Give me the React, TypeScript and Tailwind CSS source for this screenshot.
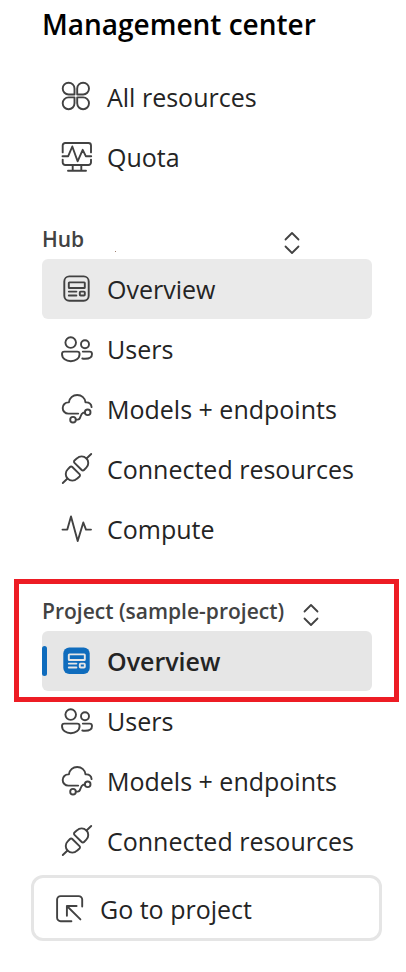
import type { ReactNode } from "react";

function Icon({ children }: { children: ReactNode }) {
  return (
    <svg
      className="size-9 shrink-0"
      viewBox="0 0 36 36"
      fill="none"
      stroke="currentColor"
      strokeWidth="1.9"
      strokeLinecap="round"
      strokeLinejoin="round"
      aria-hidden="true"
    >
      {children}
    </svg>
  );
}

function CloverIcon() {
  return (
    <Icon>
      <path d="M16.5 15.5V9.6A5.9 5.9 0 1 0 10.6 15.5Z" />
      <path d="M19.2 15.5V9.6A5.9 5.9 0 1 1 25.1 15.5Z" />
      <path d="M16.5 18.4V24.3A5.9 5.9 0 1 1 10.6 18.4Z" />
      <path d="M19.2 18.4V24.3A5.9 5.9 0 1 0 25.1 18.4Z" />
    </Icon>
  );
}

function QuotaIcon() {
  return (
    <Icon>
      <path d="M4.7 13.4V6.5a2.5 2.5 0 0 1 2.5-2.5H30.5a2.5 2.5 0 0 1 2.5 2.5V13.4" />
      <path d="M4.7 20.6v2.9a2.5 2.5 0 0 0 2.5 2.5H30.5a2.5 2.5 0 0 0 2.5-2.5V20.6" />
      <path d="M4.5 17.2H10.2L14.3 7.5L19.6 22.3L24.7 10.8L27.8 17.2H33.2" />
      <path d="M14.7 26v5.6M23.3 26v5.6M10 31.8H28" />
    </Icon>
  );
}

function OverviewIcon() {
  return (
    <Icon>
      <rect x="6.3" y="5.4" width="24.4" height="24.4" rx="5" />
      <rect x="10.8" y="11.4" width="16" height="5.6" rx="0.6" />
      <path d="M10.8 20.6h7.6M10.8 24.5h7.6" />
      <rect x="21.8" y="20.6" width="5" height="3.9" rx="0.8" />
    </Icon>
  );
}

function OverviewFilledIcon() {
  return (
    <Icon>
      <rect x="5.3" y="4.5" width="26.4" height="26.4" rx="6" fill="#0f6cbd" stroke="none" />
      <g stroke="#e6e6e6">
        <rect x="10.8" y="11.4" width="16" height="5.6" rx="0.6" />
        <path d="M10.8 20.6h7.6M10.8 24.5h7.6" />
        <rect x="21.8" y="20.6" width="5" height="3.9" rx="0.8" />
      </g>
    </Icon>
  );
}

function UsersIcon() {
  return (
    <Icon>
      <circle cx="12.7" cy="11.6" r="5.3" />
      <circle cx="27" cy="13.2" r="4" />
      <path d="M6.4 20.6H19.2a2.4 2.4 0 0 1 2.4 2.4C21.6 27.6 17.5 30.2 12.8 30.2S4 27.6 4 23a2.4 2.4 0 0 1 2.4-2.4Z" />
      <path d="M24.8 20.6H31.6a2.4 2.4 0 0 1 2.4 2.4C34 26.2 30.8 27.8 27 27.8c-1 0-1.9-.1-2.7-.3" />
    </Icon>
  );
}

function ModelsIcon() {
  return (
    <Icon>
      <path d="M20.2 22.6H10.3a5.6 5.6 0 0 1 0-11.2h.6C11.6 6.8 15 4 19.2 4s7.7 2.8 8.3 7.4h.8c2.8 0 5 2 5.3 4.7" />
      <circle cx="29.7" cy="21.3" r="2.8" />
      <circle cx="15" cy="28.7" r="2.8" />
      <path d="M17.9 28.6h1.9c3.4 0 2-5.6 5.2-6.8h1.8" />
    </Icon>
  );
}

function PlugIcon() {
  const half =
    "M14.3 16L21.5 23.2a1.6 1.6 0 0 1 0 2.3L19 27.7a6.5 6.5 0 0 1-9.3 0a6.5 6.5 0 0 1 0-9.3L12 16a1.6 1.6 0 0 1 2.3 0Z";
  return (
    <Icon>
      <path d={half} />
      <path d="M4.8 32L9.5 27.5" />
      <g transform="rotate(180 19 17.5)">
        <path d={half} />
        <path d="M4.8 32L9.5 27.5" />
      </g>
    </Icon>
  );
}

function PulseIcon() {
  return (
    <Icon>
      <path d="M4.5 18.6H9.3L13 5.5L19.7 30L25.3 11.5L28 18.6H33" />
    </Icon>
  );
}

function GoIcon() {
  return (
    <Icon>
      <path d="M30.2 16.5V9.6a3.5 3.5 0 0 0-3.5-3.5H8.6a3.5 3.5 0 0 0-3.5 3.5V27.7a3.5 3.5 0 0 0 3.5 3.5H19.4" />
      <path d="M14.9 25.8V16H24.6M14.9 16L28.4 29.4" />
    </Icon>
  );
}

function SwitchButton({ label }: { label: string }) {
  return (
    <button type="button" aria-label={label} className="mt-2 text-[#424242]">
      <svg
        className="h-6 w-4"
        viewBox="0 0 16 24"
        fill="none"
        stroke="currentColor"
        strokeWidth="1.8"
        strokeLinecap="round"
        strokeLinejoin="round"
        aria-hidden="true"
      >
        <path d="M1.5 8.5L8 2L14.5 8.5M1.5 15.5L8 22L14.5 15.5" />
      </svg>
    </button>
  );
}

type State = "plain" | "hover" | "current";

const rowStyles: Record<State, string> = {
  plain: "",
  hover: "bg-[#eaeaea]",
  current: "bg-[#e6e6e6] font-semibold",
};

function NavItem({ icon, label, state = "plain" }: { icon: ReactNode; label: string; state?: State }) {
  return (
    <li>
      <a
        href="#"
        aria-current={state === "current" ? "page" : undefined}
        className={`relative flex h-15 items-center gap-[13px] rounded-md pl-4 text-[25px] leading-9 whitespace-nowrap text-[#242424] ${rowStyles[state]}`}
      >
        {state === "current" && (
          <span className="absolute left-0 h-[30px] w-[5px] rounded-full bg-[#0f6cbd]" />
        )}
        <span className="text-[#424242]">{icon}</span>
        <span>{label}</span>
      </a>
    </li>
  );
}

export default function App() {
  return (
    <nav
      aria-label="Management center"
      className="bg-white pb-8 font-['Open_Sans','Noto_Sans',sans-serif] [&_svg]:block"
    >
      <div className="pr-[34px] pl-[42px]">
        <h1 className="h-[67px] pt-1.5 text-[28px] leading-9 font-semibold whitespace-nowrap text-black">
          Management center
        </h1>
        <ul>
          <NavItem icon={<CloverIcon />} label="All resources" />
          <NavItem icon={<QuotaIcon />} label="Quota" />
        </ul>

        <div className="mt-8 flex h-10 items-center">
          <h2 className="w-[73px] text-[21px] leading-7 font-semibold text-[#424242]">Hub</h2>
          <span className="mr-[168px] size-px translate-y-3 bg-[#a08070]" />
          <SwitchButton label="Switch hub" />
        </div>
        <ul>
          <NavItem icon={<OverviewIcon />} label="Overview" state="hover" />
          <NavItem icon={<UsersIcon />} label="Users" />
          <NavItem icon={<ModelsIcon />} label="Models + endpoints" />
          <NavItem icon={<PlugIcon />} label="Connected resources" />
          <NavItem icon={<PulseIcon />} label="Compute" />
        </ul>

        <div className="relative mt-8">
          <div className="flex h-10 items-center gap-[19px]">
            <h2 className="text-[21px] leading-7 font-semibold whitespace-nowrap text-[#424242]">
              Project (sample-project)
            </h2>
            <SwitchButton label="Switch project" />
          </div>
          <ul>
            <NavItem icon={<OverviewFilledIcon />} label="Overview" state="current" />
          </ul>
          <div className="pointer-events-none absolute -top-3 -right-[27px] -bottom-[11px] -left-7 border-5 border-[#ed1c24]" />
        </div>
        <ul>
          <NavItem icon={<UsersIcon />} label="Users" />
          <NavItem icon={<ModelsIcon />} label="Models + endpoints" />
          <NavItem icon={<PlugIcon />} label="Connected resources" />
        </ul>
      </div>
      <div className="mt-1 pr-6 pl-[31px]">
        <button
          type="button"
          className="flex h-[66px] w-full items-center gap-3 rounded-xl border-3 border-[#e5e5e5] pl-[18px] text-[25px] leading-9 text-[#242424]"
        >
          <span className="text-[#424242]">
            <GoIcon />
          </span>
          <span className="pt-0.5">Go to project</span>
        </button>
      </div>
    </nav>
  );
}
